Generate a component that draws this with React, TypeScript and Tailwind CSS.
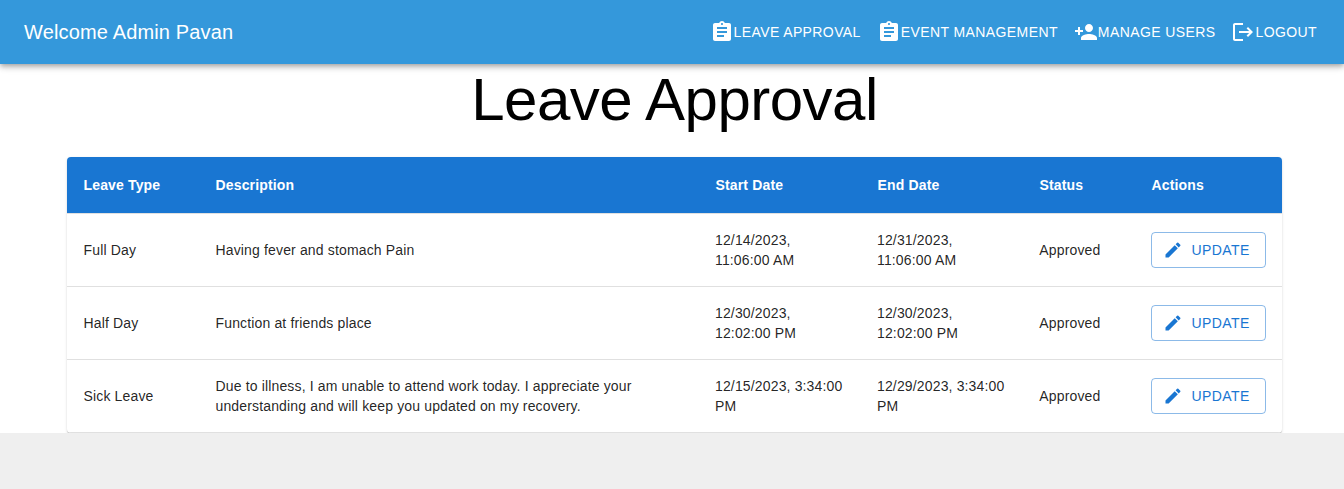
import React from "react";
import { MdAssignment, MdPersonAdd, MdLogout, MdCreate } from "react-icons/md";

const nav = [
  { label: "LEAVE APPROVAL", Icon: MdAssignment },
  { label: "EVENT MANAGEMENT", Icon: MdAssignment },
  { label: "MANAGE USERS", Icon: MdPersonAdd },
  { label: "LOGOUT", Icon: MdLogout },
];

const rows = [
  { type: "Full Day", description: "Having fever and stomach Pain", start: "12/14/2023, 11:06:00 AM", end: "12/31/2023, 11:06:00 AM" },
  { type: "Half Day", description: "Function at friends place", start: "12/30/2023, 12:02:00 PM", end: "12/30/2023, 12:02:00 PM" },
  {
    type: "Sick Leave",
    description: "Due to illness, I am unable to attend work today. I appreciate your understanding and will keep you updated on my recovery.",
    start: "12/15/2023, 3:34:00 PM",
    end: "12/29/2023, 3:34:00 PM",
  },
];

const columns = "grid grid-cols-[132px_500px_162px_162px_112px_147px] items-center";

export default function App() {
  return (
    <div className="h-[489px] overflow-hidden bg-[#efefef] font-['Liberation_Sans',Arial,sans-serif] text-black/87">
      <header className="relative flex h-16 items-center justify-between bg-[#3498db] pr-[19px] pl-6 text-white shadow-[0px_2px_4px_-1px_rgba(0,0,0,0.2),0px_4px_5px_0px_rgba(0,0,0,0.14),0px_1px_10px_0px_rgba(0,0,0,0.12)]">
        <div className="text-xl leading-8 tracking-[0.15px]">Welcome Admin Pavan</div>
        <nav className="flex">
          {nav.map(({ label, Icon }) => (
            <button key={label} className="flex items-center px-2 py-1.5 text-sm leading-6 tracking-[0.4px]">
              <Icon className="size-6" />
              {label}
            </button>
          ))}
        </nav>
      </header>
      <main className="h-[369px] overflow-hidden bg-white px-[67px]">
        <h1 className="h-[93px] pl-[5px] text-center text-[60px] leading-[72px] tracking-[-0.5px] text-black">Leave Approval</h1>
        <div className="w-[1215px] overflow-hidden rounded bg-white text-sm leading-5 tracking-[0.15px] shadow-[0px_2px_1px_-1px_rgba(0,0,0,0.2),0px_1px_1px_0px_rgba(0,0,0,0.14),0px_1px_3px_0px_rgba(0,0,0,0.12)]">
          <div className={columns + " h-[57px] border-b border-[#e0e0e0] bg-[#1976d2] bg-clip-padding font-bold text-white"}>
            {["Leave Type", "Description", "Start Date", "End Date", "Status", "Actions"].map((h) => (
              <div key={h} className="px-[16.5px]">{h}</div>
            ))}
          </div>
          {rows.map((row) => (
            <div key={row.type} className={columns + " h-[73px] border-b border-[#e0e0e0]"}>
              <div className="px-[16.5px]">{row.type}</div>
              <div className="px-[16.5px]">{row.description}</div>
              <div className="px-4">{row.start}</div>
              <div className="px-4">{row.end}</div>
              <div className="pl-[16.3px]">Approved</div>
              <div className="px-4">
                <button className="flex h-9 w-[115px] items-center rounded border border-[#1976d2]/50 pl-[11px] text-sm tracking-[0.4px] text-[#1976d2]">
                  <MdCreate className="mr-[8.5px] size-5" />
                  UPDATE
                </button>
              </div>
            </div>
          ))}
        </div>
      </main>
    </div>
  );
}
